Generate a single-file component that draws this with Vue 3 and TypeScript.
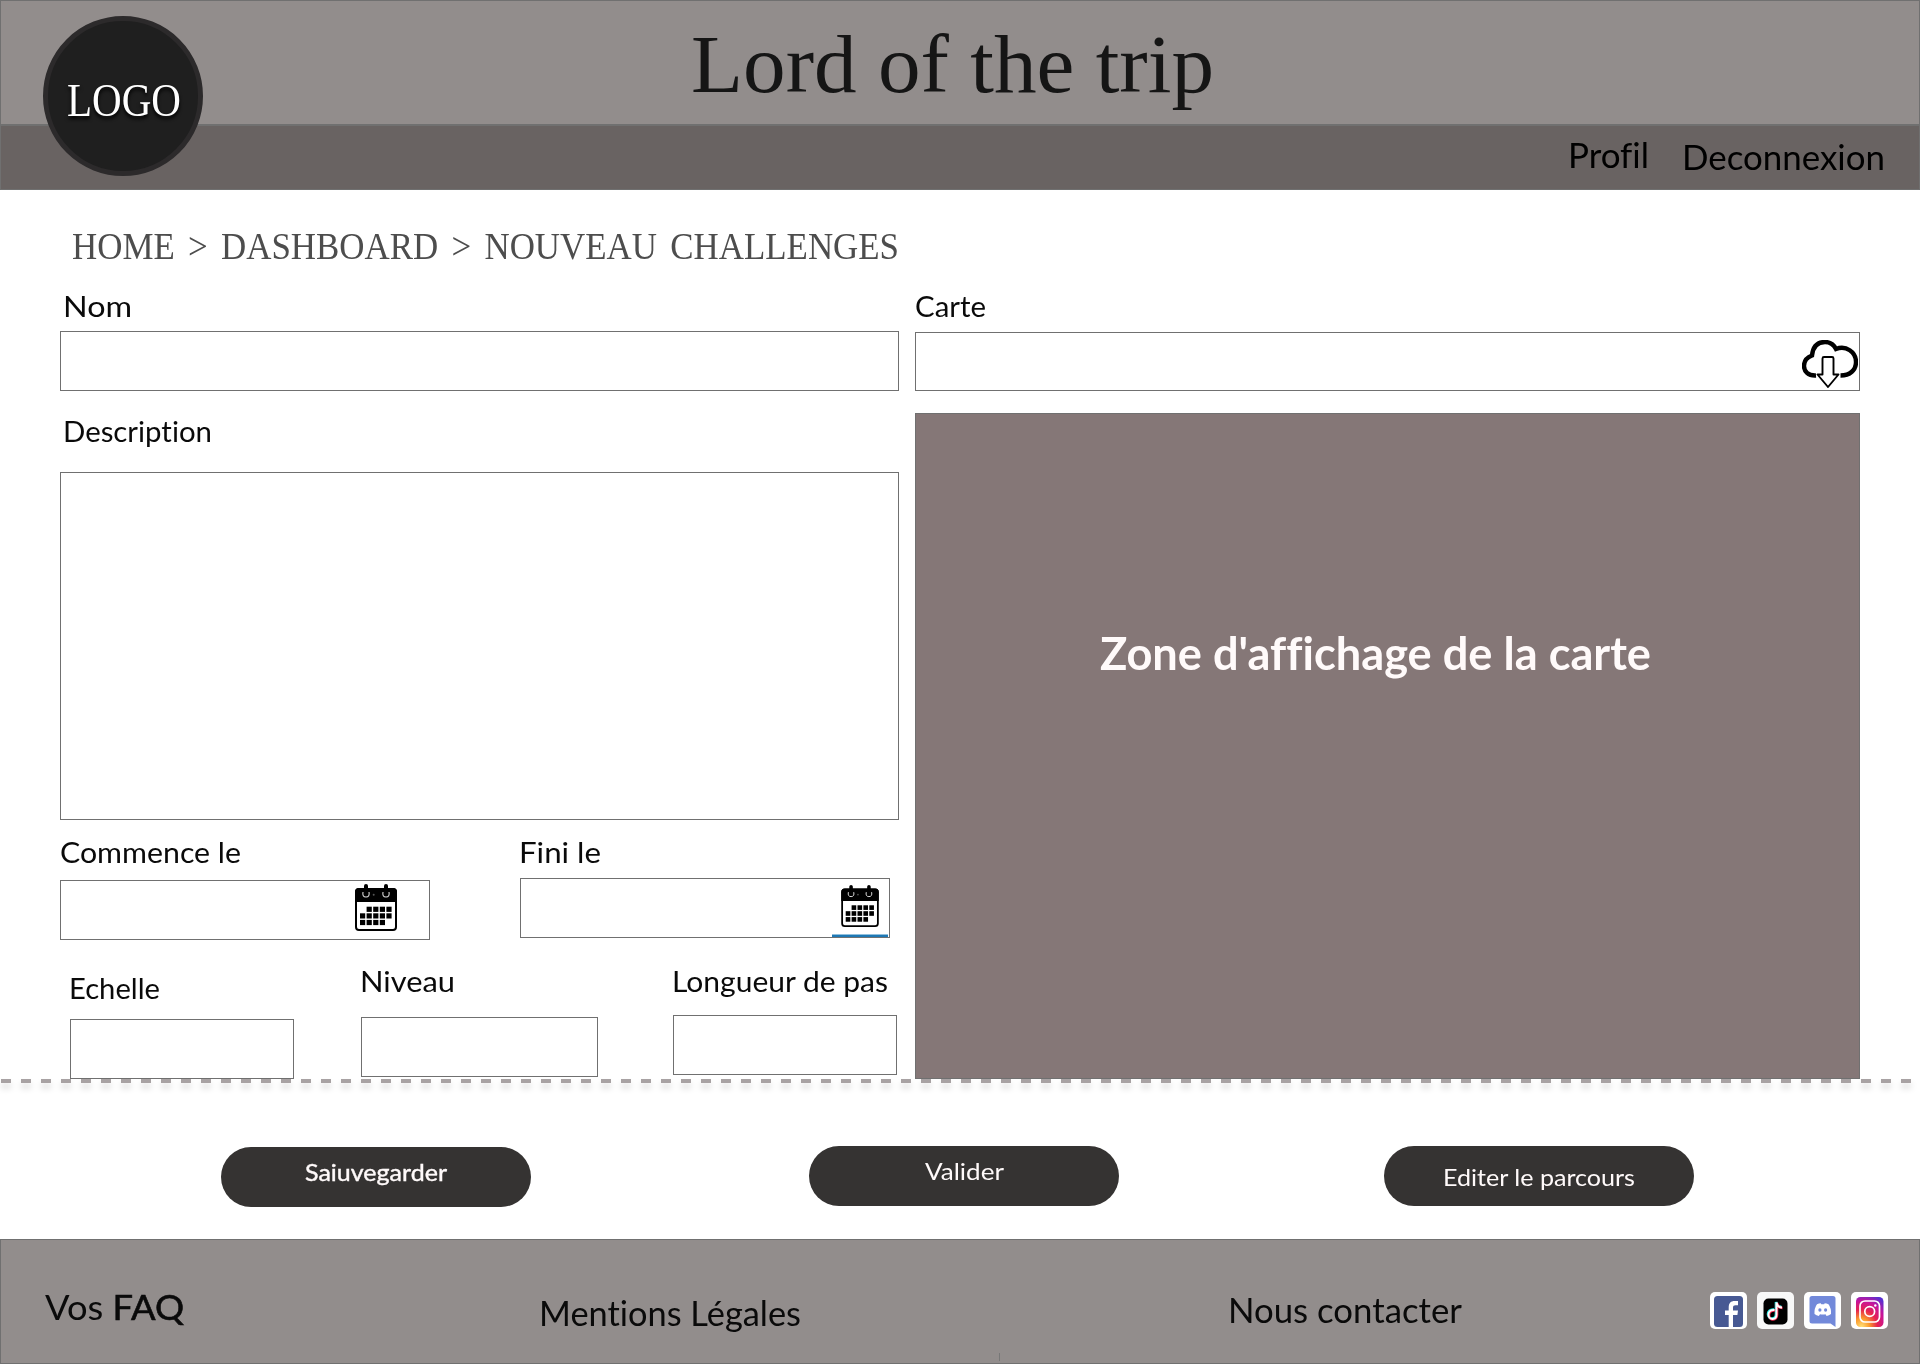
<script setup lang="ts">
import type { Directive } from 'vue'

interface SmallField {
  id: string
  label: string
  labelWidth: number
}

const smallFields: SmallField[] = [
  { id: 'scale', label: 'Echelle', labelWidth: 91 },
  { id: 'level', label: 'Niveau', labelWidth: 95 },
  { id: 'step', label: 'Longueur de pas', labelWidth: 216 },
]

// first calendar row starts on the second column, last one stops before the fifth
const days: [number, number][] = []
for (let row = 0; row < 3; row++) {
  for (let col = 0; col < 5; col++) {
    if ((row === 0 && col === 0) || (row === 2 && col === 4)) continue
    days.push([5 + col * 6.6, 22.7 + row * 6.6])
  }
}

const dashes: number[] = Array.from({ length: 96 }, (_, i) => 1 + i * 20)

// stretches the text horizontally so that it takes the given width
const vFit: Directive<HTMLElement, number> = {
  mounted(el, { value }) {
    const natural = el.getBoundingClientRect().width
    el.style.transform = `scaleX(${value / natural})`
    el.style.marginRight = `${value - natural}px`
  },
}
</script>

<template>
  <div class="page">
    <header>
      <div class="banner"><h1 v-fit="523">Lord of the trip</h1></div>
      <nav>
        <a class="profile" v-fit="81">Profil</a>
        <a class="logout" v-fit="203">Deconnexion</a>
      </nav>
      <div class="logo"><span v-fit="114">LOGO</span></div>
    </header>

    <main>
      <div class="crumbs"><span v-fit="827">HOME &gt; DASHBOARD &gt; NOUVEAU CHALLENGES</span></div>
      <div class="columns">
        <section class="form">
          <div class="label inset"><span v-fit="69">Nom</span></div>
          <div class="box name"></div>
          <div class="label inset desc"><span v-fit="149">Description</span></div>
          <div class="box area"></div>
          <div class="dates">
            <div class="start">
              <div class="label"><span v-fit="181">Commence le</span></div>
              <div class="box">
                <svg class="calendar" viewBox="0 0 42 47">
                  <rect x="1" y="5" width="40" height="41" rx="3" fill="#fff" stroke="#000" stroke-width="2" />
                  <path d="M0 18V8Q0 4 4 4H38Q42 4 42 8V18Z" />
                  <rect x="9" y="0" width="4" height="10" rx="2" />
                  <rect x="29" y="0" width="4" height="10" rx="2" />
                  <path d="M8 8Q7 13 11 13T14 8M28 8Q27 13 31 13T34 8" fill="none" stroke="#ddd" stroke-width="1.1" />
                  <circle cx="18.7" cy="10.7" r="1" fill="#555" />
                  <rect v-for="(d, i) in days" :key="i" :x="d[0]" :y="d[1]" width="5.2" height="5.2" />
                </svg>
              </div>
            </div>
            <div class="end">
              <div class="label"><span v-fit="82">Fini le</span></div>
              <div class="box">
                <svg class="calendar" viewBox="0 0 42 47">
                  <rect x="1" y="5" width="40" height="41" rx="3" fill="#fff" stroke="#000" stroke-width="2" />
                  <path d="M0 18V8Q0 4 4 4H38Q42 4 42 8V18Z" />
                  <rect x="9" y="0" width="4" height="10" rx="2" />
                  <rect x="29" y="0" width="4" height="10" rx="2" />
                  <path d="M8 8Q7 13 11 13T14 8M28 8Q27 13 31 13T34 8" fill="none" stroke="#ddd" stroke-width="1.1" />
                  <circle cx="18.7" cy="10.7" r="1" fill="#555" />
                  <rect v-for="(d, i) in days" :key="i" :x="d[0]" :y="d[1]" width="5.2" height="5.2" />
                </svg>
                <i class="strip"></i>
              </div>
            </div>
          </div>
          <div class="smalls">
            <div v-for="f in smallFields" :key="f.id" :class="f.id">
              <div class="label"><span v-fit="f.labelWidth">{{ f.label }}</span></div>
              <div class="box"></div>
            </div>
          </div>
        </section>

        <section class="map-side">
          <div class="label"><span v-fit="71">Carte</span></div>
          <div class="box file">
            <svg viewBox="0 0 56 48">
              <path d="M14 35.5C6 36 2 31 2 26C2 20 6 17 10 15.5C11 6 16 2 23 2C29 2 32 5 34 9C44 5 54 12 54 22C54 30 48 35.5 38.500 35.500" fill="none" stroke="#000" stroke-width="4.4" />
              <path d="M20.500 18.500Q20.500 17 22 17H30Q31.500 17 31.500 18.500V34.500H36.500L26 47L15.500 34.500H20.500Z" fill="#fff" stroke="#000" stroke-width="1.9" stroke-linejoin="round" />
            </svg>
          </div>
          <div class="map"><span v-fit="551">Zone d'affichage de la carte</span></div>
        </section>
      </div>

      <svg class="divider" width="1920" height="20">
        <rect v-for="x in dashes" :key="x" :x="x" y="0" width="10" height="4" />
      </svg>

      <div class="actions">
        <button class="save"><span v-fit="142">Saiuvegarder</span></button>
        <button class="validate"><span v-fit="79">Valider</span></button>
        <button class="edit"><span v-fit="192">Editer le parcours</span></button>
      </div>
    </main>

    <footer>
      <a class="faq"><span v-fit="139">Vos <b>FAQ</b></span></a>
      <a class="legal"><span v-fit="262">Mentions Légales</span></a>
      <i class="tick"></i>
      <a class="contact"><span v-fit="234">Nous contacter</span></a>
      <div class="social">
        <svg viewBox="0 0 37 37">
          <rect width="37" height="37" rx="5" fill="#fff" />
          <rect x="4" y="4" width="29" height="31" rx="3.500" fill="#475993" />
          <path d="M18.700 35V23H15V18.500H18.700V15.500C18.700 11 21 9 24.500 9H28V13.300H25.500C23.800 13.300 23 14 23 15.700V18.500H28L27.400 23H23V35Z" fill="#fff" />
        </svg>
        <svg viewBox="0 0 37 37">
          <rect width="37" height="37" rx="5" fill="#f8f8f8" />
          <rect x="6.500" y="6.500" width="24" height="26" rx="5" fill="#000" />
          <g fill="none" stroke-width="2.600">
            <path d="M17 17.500C13 17 11 19.500 11 22C11 25 13 26.500 15 26.500C17.500 26.500 19 24.500 19 22V10C19.500 13 21.500 14.800 24.500 15" stroke="#25f4ee" />
            <path d="M18 18.500C14 18 12 20.500 12 23C12 26 14 27.500 16 27.500C18.500 27.500 20 25.500 20 23V11C20.500 14 22.500 15.800 25.500 16" stroke="#fe2c55" />
            <path d="M17.500 18C13.500 17.500 11.500 20 11.500 22.500C11.500 25.500 13.500 27 15.500 27C18 27 19.500 25 19.500 22.500V10.500C20 13.500 22 15.300 25 15.500" stroke="#fff" stroke-width="1.900" />
          </g>
        </svg>
        <svg viewBox="0 0 37 37">
          <rect width="37" height="37" rx="5" fill="#fff" />
          <path d="M8 4H29Q31.500 4 31.500 6.500V35L26.500 31.500H8Q5.500 31.500 5.500 29V6.500Q5.500 4 8 4Z" fill="#7289da" />
          <path d="M13 12.300Q15 11.300 16.800 11.200L17.300 12.200H20.200L20.700 11.200Q22.500 11.300 24.500 12.300Q27.500 16.500 27 22Q25 23.700 22.600 23.900L21.500 22.200Q18.700 23 16 22.200L14.800 23.900Q12.500 23.700 10.500 22Q10 16.500 13 12.300Z" fill="#fff" />
          <ellipse cx="15.900" cy="18" rx="1.600" ry="1.800" fill="#7289da" />
          <ellipse cx="21.600" cy="18" rx="1.600" ry="1.800" fill="#7289da" />
        </svg>
        <svg viewBox="0 0 37 37">
          <defs>
            <radialGradient id="insta" cx="0.2" cy="1" r="1.150">
              <stop offset="0" stop-color="#ffe27a" />
              <stop offset="0.250" stop-color="#fb9a2c" />
              <stop offset="0.500" stop-color="#e6234f" />
              <stop offset="0.750" stop-color="#c8149a" />
              <stop offset="1" stop-color="#5a2fd0" />
            </radialGradient>
          </defs>
          <rect width="37" height="37" rx="5" fill="#fff" />
          <rect x="5" y="5" width="27.500" height="30" rx="4.500" fill="url(#insta)" />
          <rect x="9" y="9" width="19.500" height="21" rx="5" fill="none" stroke="#fff" stroke-width="1.700" />
          <circle cx="18.700" cy="19.500" r="4.900" fill="none" stroke="#fff" stroke-width="1.700" />
          <circle cx="24.300" cy="13.500" r="1.200" fill="#fff" />
        </svg>
      </div>
    </footer>
  </div>
</template>

<style>
body {
  margin: 0;
  background: #fff;
}
</style>

<style scoped>
* {
  box-sizing: border-box;
}
.page {
  width: 1920px;
  height: 1364px;
  display: flex;
  flex-direction: column;
  overflow: hidden;
  font-family: Lato, "Liberation Sans", sans-serif;
  font-variant-ligatures: none;
  color: #0a0a0a;
}
span,
h1,
nav a {
  display: inline-block;
  white-space: pre;
  transform-origin: 0 50%;
}
header {
  position: relative;
  height: 190px;
}
.banner {
  height: 125px;
  padding: 13px 0 0 690px;
  background: #928d8c;
  border: 1px solid #707070;
}
h1 {
  margin: 0;
  font: 400 83px/100px "Liberation Serif", serif;
  color: #151515;
}
nav {
  height: 65px;
  padding-left: 1567px;
  display: flex;
  background: #696362;
  border: 1px solid #707070;
  font-size: 34px;
  line-height: 40px;
  color: #000;
}
.profile {
  padding-top: 9px;
}
.logout {
  padding-top: 11px;
  margin-left: 33px;
}
nav a {
  flex: none;
}
.logo {
  position: absolute;
  left: 43px;
  top: 16px;
  width: 160px;
  height: 160px;
  padding: 54px 0 0 19px;
  border: 5px solid #2c2a2b;
  border-radius: 50%;
  background: #1f1f1f;
  color: #fff;
  font: 47px/50px "Liberation Serif", serif;
  text-shadow: 0 3px 4px #000;
}
main {
  height: 1049px;
  display: flex;
  flex-direction: column;
}
.crumbs {
  height: 44px;
  margin: 34px 0 18px 72px;
  font: 38px/44px "Liberation Serif", serif;
  word-spacing: 5px;
  color: #4d4d4d;
}
.columns {
  display: flex;
  gap: 16px;
  height: 793px;
  padding-left: 60px;
}
.form {
  width: 839px;
}
.map-side {
  width: 945px;
}
.label {
  height: 40px;
  font-size: 28.500px;
  line-height: 40px;
}
.inset {
  padding-left: 3px;
}
.box {
  height: 60px;
  border: 1px solid #707070;
  background: #fff;
}
.name {
  margin-top: 5px;
}
.desc {
  margin-top: 20px;
}
.area {
  height: 348px;
  margin-top: 21px;
}
.dates {
  display: flex;
  gap: 90px;
  height: 141px;
  padding-top: 12px;
}
.dates > div {
  width: 370px;
}
.dates .box {
  position: relative;
  display: flex;
  justify-content: flex-end;
}
.start .box {
  margin-top: 8px;
  padding: 3px 32px 0 0;
}
.end .box {
  margin-top: 6px;
  padding: 6px 10px 0 0;
}
.start .calendar {
  width: 42px;
  height: 47px;
}
.end .calendar {
  width: 38px;
  height: 42px;
}
.end .label span,
.scale .label span {
  margin-left: -1px;
}
.strip {
  position: absolute;
  right: 1px;
  bottom: 0;
  width: 56px;
  height: 3px;
  background: #1e78b4;
  border-top: 1px solid #8fbfdd;
}
.smalls {
  display: flex;
  padding-left: 10px;
}
.scale {
  width: 224px;
  padding-top: 7px;
}
.scale .box {
  margin-top: 11px;
}
.level {
  width: 237px;
  margin-left: 67px;
}
.level .box {
  margin-top: 16px;
}
.step {
  width: 224px;
  margin-left: 75px;
}
.step .box {
  margin-top: 14px;
}
.step span,
.level span {
  margin-left: -1px;
}
.file {
  height: 59px;
  margin-top: 6px;
  display: flex;
  justify-content: flex-end;
  padding: 7px 1px 0 0;
}
.file svg {
  width: 56px;
  height: 48px;
}
.map {
  height: 666px;
  margin-top: 22px;
  padding: 212px 0 0 184px;
  background: #857777;
  border: 1px solid #707070;
  color: #fffafa;
  font-size: 45px;
  font-weight: 700;
  line-height: 54px;
}
.divider {
  display: block;
  flex: none;
  fill: #a8a2a3;
  filter: drop-shadow(0 5px 3px rgba(0, 0, 0, 0.16));
}
.actions {
  display: flex;
  padding: 47px 0 0 221px;
}
button {
  display: block;
  width: 310px;
  height: 60px;
  padding: 0;
  border: 0;
  border-radius: 30px;
  background: #353332;
  color: #fffafa;
  font: 24px/30px Lato, "Liberation Sans", sans-serif;
  text-align: left;
}
.save {
  margin-top: 1px;
  padding: 0 0 10px 84px;
  -webkit-text-stroke: 0.400px #fffafa;
}
.validate {
  margin-left: 278px;
  padding: 0 0 10px 116px;
}
.edit {
  margin-left: 265px;
  padding: 2px 0 0 59px;
}
footer {
  height: 125px;
  display: flex;
  padding-left: 44px;
  background: #928d8c;
  border: 1px solid #707070;
  font-size: 34px;
  line-height: 40px;
}
footer a {
  flex: none;
}
.faq {
  width: 494px;
  padding-top: 47px;
}
.faq b {
  font-weight: 400;
  -webkit-text-stroke: 0.600px #0a0a0a;
}
.legal {
  width: 460px;
  padding-top: 53px;
}
.tick {
  width: 1px;
  height: 8px;
  margin: 113px 228px 0 0;
  background: #777;
}
.contact {
  width: 482px;
  padding-top: 50px;
}
.social {
  display: flex;
  gap: 10px;
  padding-top: 52px;
}
.social svg {
  width: 37px;
  height: 37px;
}
</style>
